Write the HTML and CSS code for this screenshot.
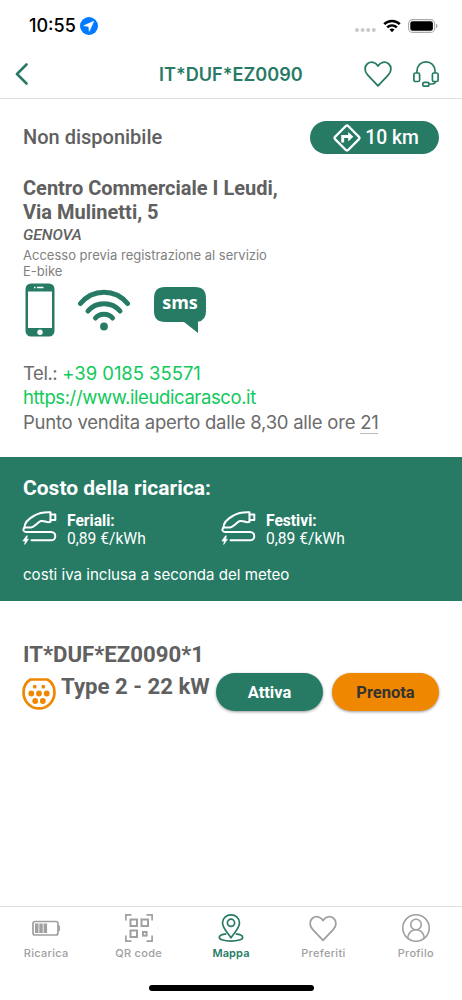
FILE: index.html
```
<!DOCTYPE html>
<html lang="it">
<head>
    <meta charset="UTF-8">
    <meta name="viewport" content="width=device-width, initial-scale=1.0">
    <title>IT*DUF*EZ0090</title>
    <link rel="stylesheet" href="styles.css">
</head>
<body>
    <svg class="symbols">
        <symbol id="heart" viewBox="0 0 28 26">
            <path d="M14 24.8 L3.6 13.9 C0.2 10.2 0.4 5.4 3.4 2.8 C6.8 0 11.6 0.8 14 5 C16.4 0.8 21.2 0 24.6 2.8 C27.6 5.4 27.8 10.2 24.4 13.9 Z" fill="none" stroke="currentColor" stroke-width="1.8" stroke-linejoin="round"/>
        </symbol>
        <symbol id="plug" viewBox="0 0 36 34">
            <g fill="none" stroke="currentColor" stroke-width="2" stroke-linejoin="round" stroke-linecap="round">
                <path d="M2.500 16.500 C2.500 12 6 8 12.500 4.500 C17 1.800 21 1 28.500 1.300 V10.800 C25 12.300 22.500 9.300 19 10 C15.500 11 13 16 8.500 16.500 H2.500"/>
                <path d="M28.500 3.500 H33.300 V9 H28.500"/>
                <path d="M2.500 16.500 C0.500 18.500 1.500 21 4 21 H29 C34.700 21 34.700 29.300 29 29.300 H9.500"/>
            </g>
            <path d="M4.500 24.800 L0.800 30 H3.200 L2.700 33.500 L6.500 28.300 H4.700 L5.400 24.800 Z" fill="currentColor" stroke="currentColor" stroke-width="0.600"/>
        </symbol>
    </svg>

    <div class="status-bar">
        <span class="time">10:55</span>
        <svg class="location" viewBox="0 0 18 18">
            <circle cx="9" cy="9" r="9" fill="#007aff"/>
            <path d="M13.700 4.300 L3.700 8.700 L8.700 9.400 L9.300 14.300 Z" fill="#fff" stroke="#fff" stroke-width="0.600" stroke-linejoin="round"/>
        </svg>
        <svg class="signal" viewBox="0 0 21 4" fill="#c9c9c9">
            <circle cx="2" cy="2" r="2"/>
            <circle cx="7.600" cy="2" r="2"/>
            <circle cx="13.200" cy="2" r="2"/>
            <circle cx="18.800" cy="2" r="2"/>
        </svg>
        <svg class="status-wifi" viewBox="0 0 18 14">
            <g fill="none" stroke="#000" stroke-width="2.500">
                <path d="M1.200 5.200 C5.500 0.800 12.500 0.800 16.800 5.200"/>
                <path d="M4.200 8.400 C7 5.800 11 5.800 13.800 8.400"/>
            </g>
            <path d="M6.500 10.600 Q9 8.600 11.500 10.600 L9 13.300 Z"/>
        </svg>
        <svg class="status-battery" viewBox="0 0 30 14">
            <rect x="0.600" y="0.600" width="26" height="12.800" rx="4" fill="none" stroke="#aaa" stroke-width="1.100"/>
            <rect x="2.300" y="2.300" width="22.600" height="9.400" rx="2.200"/>
            <path d="M28 4.800 Q29.600 5.300 29.600 7 Q29.600 8.700 28 9.200 Z" fill="#aaa"/>
        </svg>
    </div>

    <header class="header">
        <svg class="back" viewBox="0 0 14 22">
            <path d="M11.500 1.500 L2 11 L11.500 20.500" fill="none" stroke="currentColor" stroke-width="2.600" stroke-linecap="round" stroke-linejoin="round"/>
        </svg>
        <h1 class="title">IT*DUF*EZ0090</h1>
        <svg class="favorite"><use href="#heart"/></svg>
        <svg class="support" viewBox="0 0 26 26" fill="none" stroke="currentColor" stroke-width="1.700">
            <path d="M4 12 V10 C4 4.600 8 0.900 13 0.900 C18 0.900 22 4.600 22 10 V12"/>
            <rect x="0.900" y="12" width="5.700" height="8.500" rx="1.500"/>
            <rect x="19.400" y="12" width="5.700" height="8.500" rx="1.500"/>
            <rect x="9.800" y="21.300" width="6.200" height="3.800" rx="1.700"/>
            <path d="M16 23 H19 Q22 23 22.300 20.500"/>
        </svg>
    </header>

    <main class="content">
        <section class="station">
            <div class="availability">
                <span class="state">Non disponibile</span>
                <button class="distance">
                    <svg class="directions" viewBox="0 0 28 28">
                        <rect x="4.700" y="4.700" width="18.600" height="18.600" rx="2" transform="rotate(45 14 14)" fill="none" stroke="#fff" stroke-width="2.300"/>
                        <path d="M9.700 18.500 V12.500 H16" fill="none" stroke="#fff" stroke-width="2.900"/>
                        <path d="M15.200 8 L20.300 12.700 L15.200 17.400 Z" fill="#fff"/>
                    </svg>
                    <span>10 km</span>
                </button>
            </div>

            <h2 class="name">Centro Commerciale I Leudi,<br>Via Mulinetti, 5</h2>
            <p class="city">GENOVA</p>
            <p class="access">Accesso previa registrazione al servizio<br>E-bike</p>

            <div class="methods">
                <svg class="phone" viewBox="0 0 30 54">
                    <rect x="0.500" y="0.500" width="29" height="53" rx="5.500" fill="currentColor"/>
                    <rect x="3" y="8.500" width="24" height="36.500" fill="#fff"/>
                    <path d="M9 4.500 H10.500 M12 4.500 H18.500" stroke="#fff" stroke-width="1.600"/>
                    <circle cx="15" cy="49.300" r="2.700" fill="#fff"/>
                </svg>
                <svg class="wifi" viewBox="0 0 54 42">
                    <g fill="none" stroke="currentColor" stroke-width="5" stroke-linecap="round">
                        <path d="M3.500 14.500 C16 -0.500 38 -0.500 50.500 14.500"/>
                        <path d="M11 22 C19 12.200 35 12.200 43 22"/>
                        <path d="M18.500 29 C22.500 24 31.500 24 35.500 29"/>
                    </g>
                    <circle cx="27" cy="37.500" r="3.900" fill="currentColor"/>
                </svg>
                <svg class="sms" viewBox="0 0 52 46">
                    <path d="M11 0 H41 Q52 0 52 11 V24 Q52 33.500 44 34.700 V46 L30 35 H11 Q0 35 0 24 V11 Q0 0 11 0 Z" fill="currentColor"/>
                    <text x="26" y="22" text-anchor="middle" class="sms-label">sms</text>
                </svg>
            </div>

            <div class="contacts">
                <p class="phone-line"><span class="label">Tel.:</span> <a href="tel:+39018535571">+39 0185 35571</a></p>
                <p class="site"><a href="https://www.ileudicarasco.it">https://www.ileudicarasco.it</a></p>
                <p class="hours">Punto vendita aperto dalle 8,30 alle ore <span class="hour">21</span></p>
            </div>
        </section>

        <section class="cost">
            <h3 class="cost-title">Costo della ricarica:</h3>
            <div class="rates">
                <div class="rate">
                    <svg class="plug"><use href="#plug"/></svg>
                    <div class="rate-text"><b>Feriali:</b><br>0,89 €/kWh</div>
                </div>
                <div class="rate">
                    <svg class="plug"><use href="#plug"/></svg>
                    <div class="rate-text"><b>Festivi:</b><br>0,89 €/kWh</div>
                </div>
            </div>
            <p class="cost-note">costi iva inclusa a seconda del meteo</p>
        </section>

        <section class="socket">
            <h3 class="socket-id">IT*DUF*EZ0090*1</h3>
            <div class="socket-row">
                <svg class="type2" viewBox="0 0 34 32" fill="#ef8700">
                    <path d="M8.500 1.500 H25.500 C30.500 4.500 32.500 9 32.500 14.500 C32.500 23.500 25.500 30.400 17 30.400 C8.500 30.400 1.500 23.500 1.500 14.500 C1.500 9 3.500 4.500 8.500 1.500 Z" fill="none" stroke="#ef8700" stroke-width="2.700" stroke-linejoin="round"/>
                    <circle cx="12.700" cy="8.700" r="1.900"/>
                    <circle cx="21.300" cy="8.700" r="1.900"/>
                    <circle cx="9.300" cy="15.500" r="2.900"/>
                    <circle cx="17" cy="15.500" r="2.900"/>
                    <circle cx="24.700" cy="15.500" r="2.900"/>
                    <circle cx="13.200" cy="23" r="2.900"/>
                    <circle cx="20.800" cy="23" r="2.900"/>
                </svg>
                <span class="socket-type">Type 2 - 22 kW</span>
                <button class="button activate">Attiva</button>
                <button class="button book">Prenota</button>
            </div>
        </section>
    </main>

    <nav class="tabs">
        <a class="tab">
            <svg viewBox="0 0 28 28">
                <rect x="1" y="7.500" width="25" height="13.500" rx="2" fill="none" stroke="currentColor" stroke-width="1.700"/>
                <path d="M27 11.500 V17" stroke="currentColor" stroke-width="1.800"/>
                <path d="M3 9.500 H6.500 V19 H3 Z M7.300 9.500 H10.800 V19 H7.300 Z M11.600 9.500 H15.100 V19 H11.600 Z" fill="currentColor"/>
            </svg>
            <span>Ricarica</span>
        </a>
        <a class="tab">
            <svg viewBox="0 0 28 28" fill="none" stroke="currentColor" stroke-width="1.700">
                <path d="M0.900 6.500 V0.900 H6.500 M21.500 0.900 H27.100 V6.500 M27.100 21.500 V27.100 H21.500 M6.500 27.100 H0.900 V21.500"/>
                <g stroke-width="2">
                    <rect x="5.500" y="5.500" width="6.500" height="6.500"/>
                    <rect x="16.500" y="5.500" width="6.500" height="6.500"/>
                    <rect x="5.500" y="16.500" width="6.500" height="6.500"/>
                    <rect x="18" y="18" width="3.600" height="3.600"/>
                </g>
            </svg>
            <span>QR code</span>
        </a>
        <a class="tab active">
            <svg viewBox="0 0 28 28" fill="none" stroke="currentColor" stroke-width="1.700" stroke-linejoin="round">
                <path d="M14 23.800 C11 19 5.500 14 5.500 9 C5.500 4 9.300 0.900 14 0.900 C18.700 0.900 22.500 4 22.500 9 C22.500 14 17 19 14 23.800 Z"/>
                <circle cx="14" cy="8.800" r="3.600"/>
                <path d="M9.300 19.900 C5 20.300 2.300 21.700 2.300 23.400 C2.300 25.500 7.500 27.100 14 27.100 C20.500 27.100 25.700 25.500 25.700 23.400 C25.700 21.700 23 20.300 18.700 19.900"/>
            </svg>
            <span>Mappa</span>
        </a>
        <a class="tab">
            <svg><use href="#heart" y="1" height="27"/></svg>
            <span>Preferiti</span>
        </a>
        <a class="tab">
            <svg viewBox="0 0 28 28" fill="none" stroke="currentColor" stroke-width="1.600">
                <circle cx="14" cy="14" r="13.200"/>
                <circle cx="14" cy="10.500" r="5.300"/>
                <path d="M5.700 24 C6.500 18.500 9.500 15.800 14 15.800 C18.500 15.800 21.500 18.500 22.300 24"/>
            </svg>
            <span>Profilo</span>
        </a>
    </nav>
    <div class="home-indicator"></div>
</body>
</html>
```
FILE: styles.css
```
* {
    box-sizing: border-box;
}

body {
    margin: 0;
    height: 1000px;
    display: flex;
    flex-direction: column;
    overflow: hidden;
    background: #fff;
    color: #606060;
    font-family: Roboto, sans-serif;
}

h1, h2, h3, p {
    margin: 0;
}

svg {
    display: block;
    flex: none;
}

a {
    color: #10c95b;
    text-decoration: none;
}

button {
    border: none;
    padding: 0;
    font-family: inherit;
}

.symbols {
    display: none;
}

/* Status bar */
.status-bar {
    height: 50px;
    padding: 2px 24px 0 29px;
    display: flex;
    align-items: center;
    color: #000;
}

.time {
    width: 51px;
    font: 500 18px/20px Inter, sans-serif;
}

.location {
    width: 18px;
    height: 18px;
}

.signal {
    width: 21px;
    height: 4px;
    margin: 8px 7px 0 auto;
}

.status-wifi {
    width: 18px;
    height: 14px;
    margin-right: 7px;
}

.status-battery {
    width: 30px;
    height: 14px;
}

/* Header */
.header {
    height: 49px;
    padding: 0 23px 0 15px;
    display: flex;
    align-items: center;
    border-bottom: 1px solid #dedede;
    color: #277b65;
}

.back {
    width: 14px;
    height: 22px;
}

.title {
    margin-left: 130px;
    font: 600 18.100px/24px Inter, sans-serif;
    white-space: nowrap;
}

.favorite {
    width: 28px;
    height: 26px;
    margin: 0 21px 0 auto;
}

.support {
    width: 26px;
    height: 26px;
}

/* Station details */
.content {
    flex: 1;
}

.station {
    height: 358px;
    padding: 22px 23px 0;
}

.availability {
    display: flex;
    justify-content: space-between;
    align-items: center;
}

.state {
    margin-bottom: 2px;
    font-size: 20px;
    font-weight: 500;
}

.distance {
    width: 129px;
    height: 33px;
    padding-left: 3px;
    border-radius: 17px;
    display: flex;
    align-items: center;
    justify-content: center;
    gap: 4px;
    background: #277b65;
    color: #fff;
    font-size: 19.300px;
    font-weight: 500;
}

.directions {
    width: 28px;
    height: 28px;
}

.name {
    margin-top: 22px;
    font-size: 20px;
    line-height: 24px;
    font-weight: 700;
}

.city {
    font-size: 15.500px;
    line-height: 22px;
    font-weight: 500;
    font-style: italic;
}

.access {
    margin-top: 1px;
    font: 400 13px/16px Inter, sans-serif;
    color: #808080;
}

.methods {
    height: 54px;
    margin-top: 4px;
    padding-left: 2px;
    display: flex;
    color: #277b65;
}

.phone {
    width: 30px;
    height: 54px;
}

.wifi {
    width: 54px;
    height: 42px;
    margin: 6px 0 0 22px;
}

.sms {
    width: 52px;
    height: 46px;
    margin: 4px 0 0 23px;
}

.sms-label {
    font: 700 18px "Open Sans", sans-serif;
    fill: #fff;
}

.contacts {
    margin-top: 24px;
    font: 400 18.500px/24.500px Inter, sans-serif;
    color: #6b6b6b;
    white-space: nowrap;
}

.label {
    letter-spacing: -0.450px;
}

.phone-line {
    letter-spacing: -0.050px;
}

.site {
    margin: -1px 0 1px;
    letter-spacing: -0.400px;
}

.hours {
    letter-spacing: -0.240px;
}

.hour {
    border-bottom: 1px solid #bbb;
}

/* Charging cost */
.cost {
    height: 144px;
    padding: 18px 23px 0;
    background: #277b65;
    color: #fff;
}

.cost-title {
    font-size: 21px;
    line-height: 26px;
    font-weight: 700;
}

.rates {
    margin-top: 10px;
    display: flex;
}

.rate {
    width: 199px;
    display: flex;
    gap: 9px;
}

.plug {
    width: 36px;
    height: 34px;
    margin-left: -1px;
}

.rate-text {
    padding-top: 1px;
    font-size: 15.600px;
    line-height: 18px;
}

.cost-note {
    margin-top: 17px;
    font: 400 15.100px/20px Inter, sans-serif;
}

/* Socket */
.socket {
    padding: 39px 23px 0;
}

.socket-id {
    font-size: 22.200px;
    line-height: 28px;
    font-weight: 700;
}

.socket-row {
    margin-top: 4px;
    display: flex;
}

.type2 {
    width: 34px;
    height: 32px;
    margin: 6px 4px 0 -1px;
}

.socket-type {
    width: 156px;
    padding-left: 1px;
    font-size: 22.200px;
    line-height: 28px;
    font-weight: 700;
    white-space: nowrap;
}

.button {
    width: 107px;
    height: 38px;
    flex: none;
    margin-top: 1px;
    border-radius: 19px;
    font-size: 16.500px;
    font-weight: 700;
    box-shadow: 0 1px 3px rgba(0, 0, 0, 0.4);
}

.activate {
    margin-right: 9px;
    background: #277b65;
    color: #fff;
}

.book {
    background: #ef8700;
    color: #333;
}

/* Tab bar */
.tabs {
    height: 77px;
    padding-top: 7px;
    border-top: 1px solid #dedede;
    display: flex;
}

.tab {
    flex: 1;
    display: flex;
    flex-direction: column;
    align-items: center;
    gap: 4px;
    color: #a0a0a0;
    font: 500 11px/14px Inter, sans-serif;
    letter-spacing: 0.300px;
}

.tab svg {
    width: 28px;
    height: 28px;
}

.tab.active {
    color: #277b65;
    font-weight: 600;
    letter-spacing: 0.100px;
}

.home-indicator {
    width: 165px;
    height: 6px;
    margin: 2px auto 9px;
    border-radius: 3px;
    background: #000;
}
```
